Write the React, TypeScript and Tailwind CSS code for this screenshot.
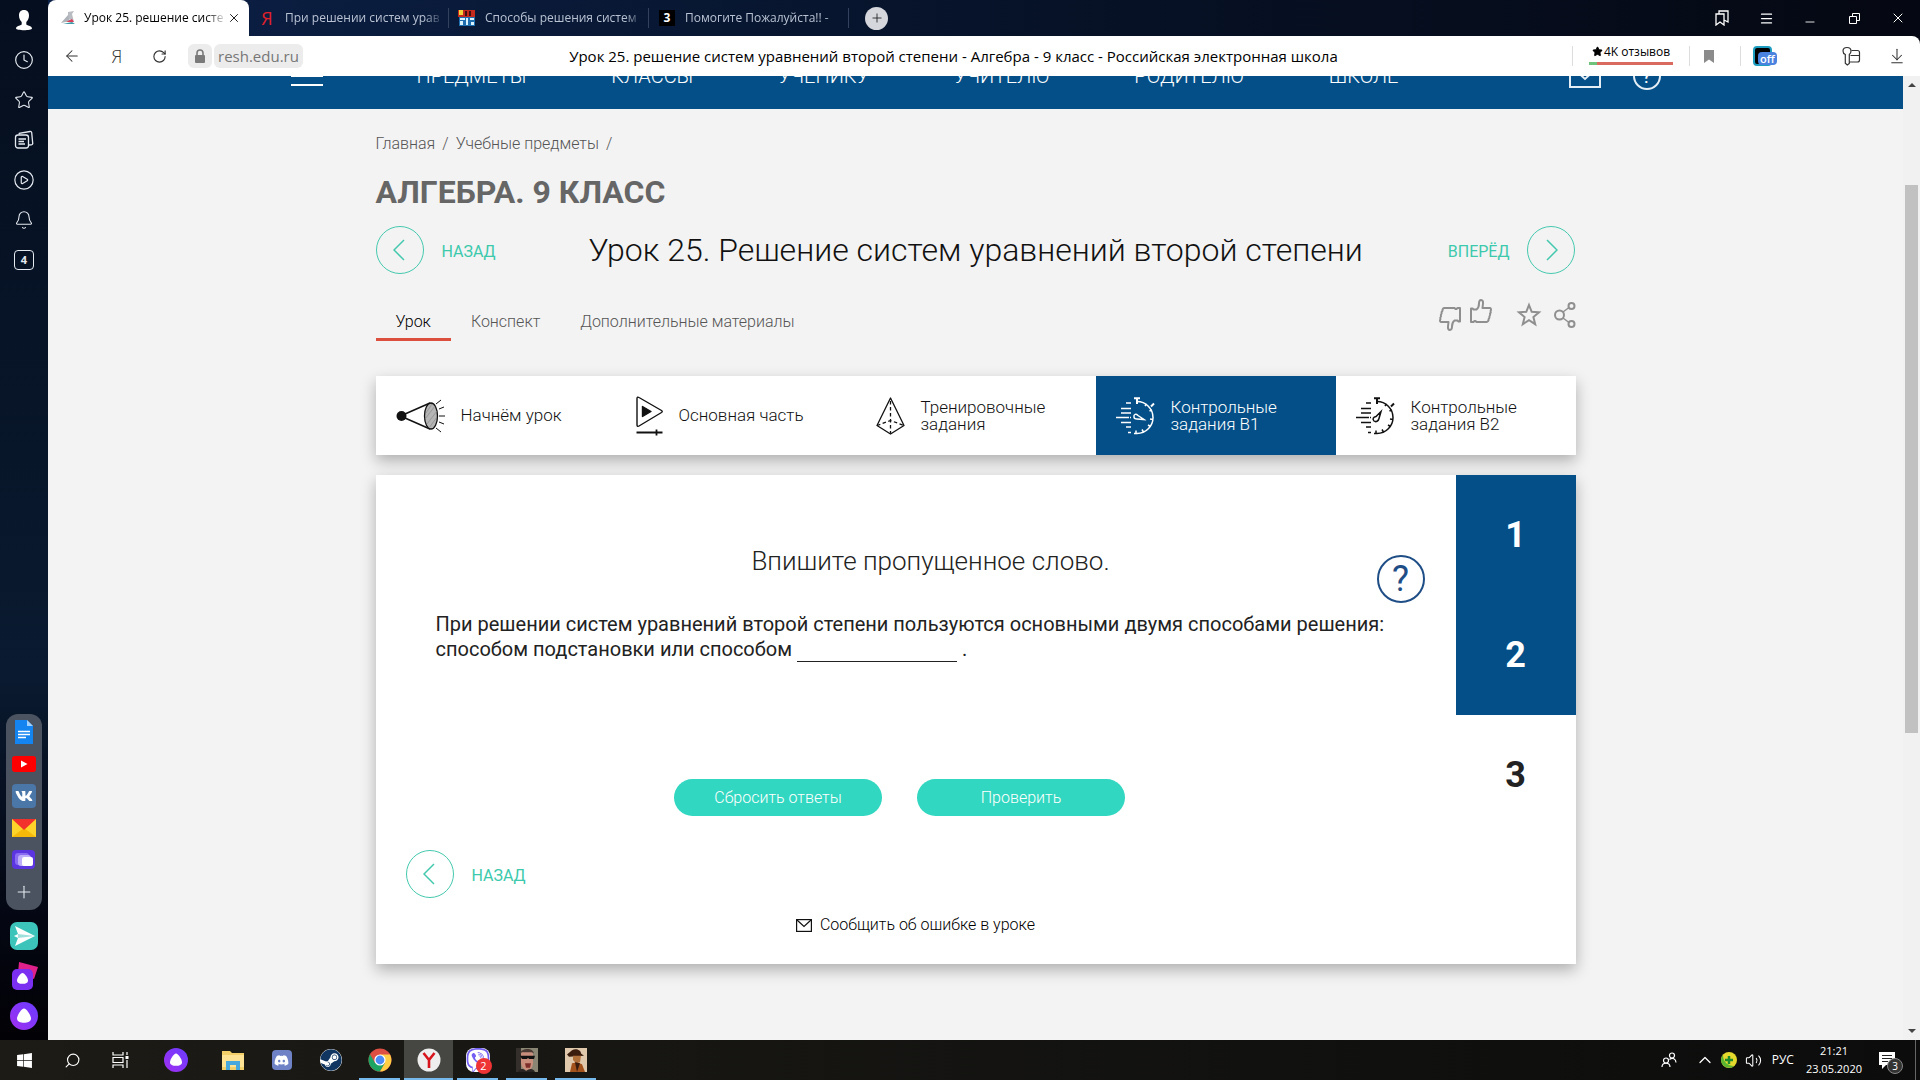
import React from 'react';
import {
  ArrowDownToLine,
  ArrowLeft,
  Bell,
  ChevronUp,
  CirclePlay,
  Clock,
  Menu,
  Minus,
  Plus,
  RotateCw,
  Search,
  Star,
  Volume2,
  X,
} from 'lucide-react';
import { FaDiscord, FaSteam, FaViber, FaVk, FaWindows } from 'react-icons/fa';

/* ---------- small drawings ---------- */

const AliceMark = ({ size }: { size: number }) => (
  <svg width={size} height={size} viewBox="0 0 28 28">
    <defs>
      <linearGradient id="alice" x1="0" y1="1" x2="1" y2="0">
        <stop offset="0" stopColor="#a02ff0" />
        <stop offset="1" stopColor="#6a3cff" />
      </linearGradient>
    </defs>
    <circle cx="14" cy="14" r="14" fill="url(#alice)" />
    <path d="M14 6.500c2.400 0 7 6.800 7 10 0 3-3.500 4.300-7 4.300s-7-1.300-7-4.300c0-3.200 4.600-10 7-10z" fill="#fff" />
  </svg>
);

const ChromeMark = () => (
  <svg width="24" height="24" viewBox="0 0 24 24">
    <circle cx="12" cy="12" r="11.500" fill="#dd4f43" />
    <path d="M2 6.300A11.500 11.500 0 0 0 12 23.500L17 15H7z" fill="#1da362" />
    <path d="M12 23.500A11.500 11.500 0 0 0 22 6.500H12L17 15z" fill="#ffce44" />
    <circle cx="12" cy="12" r="5.600" fill="#fff" />
    <circle cx="12" cy="12" r="4.400" fill="#4c8bf5" />
  </svg>
);

const Person = () => (
  <svg width="20" height="24" viewBox="0 0 20 24" fill="#fff">
    <path d="M10 2c3.300 0 5 2.200 5 5.500 0 3-1.200 5.200-2.700 6.400v2.300c0 1.200 5.700 1.500 5.700 4.300 0 .9-4 1.700-8 1.700s-8-.8-8-1.700c0-2.800 5.700-3.100 5.700-4.300v-2.300C6.200 12.700 5 10.500 5 7.500 5 4.200 6.700 2 10 2z" />
  </svg>
);

const Collections = () => (
  <svg width="20" height="20" viewBox="0 0 20 20" fill="none" stroke="#e5e9f0" strokeWidth="1.300">
    <rect x="1.500" y="5" width="13" height="13" rx="2.500" />
    <path d="M5 4.500l.3-1.200L16 1.500a1.500 1.500 0 0 1 1.700 1.200l1 10.500a1.500 1.500 0 0 1-1.500 1.700L15 15M4.500 9H12M4.500 11.500H10M4.500 14H11" />
  </svg>
);

const ThumbUp = ({ className = '' }: { className?: string }) => (
  <svg className={className} width="24" height="28" viewBox="0 0 24 28" fill="none" stroke="#8f8f8f" strokeWidth="2" strokeLinejoin="round">
    <path d="M2 10.500h1.500l1 1h3c2-1.500 2.500-3.500 2.500-6 0-2.300.7-3.500 2-3.500 1.700 0 2.200 1.600 2 3.500l-.5 4.500h7.500c1.200.3 1.300 1.800.6 2.800.3 1 .2 2-.6 2.800.4 1 .2 2-.6 2.800.3 1 0 2-.8 2.600.1 1.500-.6 3-2 3H7.500l-1-1h-1l-1 1H2z" />
  </svg>
);

const Share = () => (
  <svg width="22" height="26" viewBox="0 0 22 26" fill="none" stroke="#8f8f8f" strokeWidth="2">
    <circle cx="5.500" cy="13" r="4.500" />
    <circle cx="17.500" cy="4" r="3" />
    <circle cx="17.500" cy="22" r="3" />
    <path d="M9 10l6-4.500M9 16l6 4.500" strokeWidth="1.500" />
  </svg>
);

const StarOutline = () => (
  <svg width="26" height="26" viewBox="0 0 26 26" fill="none" stroke="#8f8f8f" strokeWidth="2">
    <path d="M13 3l2.700 6.800 7.300.5-5.600 4.700 1.800 7.200-6.200-4-6.200 4 1.800-7.200L3 10.300l7.300-.5z" />
  </svg>
);

const Spotlight = () => (
  <svg width="49" height="34" viewBox="0 0 49 34" fill="none" stroke="#111">
    <circle cx="5.500" cy="17" r="5" fill="#111" stroke="none" />
    <path d="M9 15L34 4M9 19l25 11" strokeWidth="1.500" />
    <ellipse cx="35" cy="17" rx="6.500" ry="13" fill="#b5b5b5" strokeWidth="1.300" />
    <path d="M30 14l6-9M29 20l10-13M31 25l10-13M33 29l8-11" stroke="#888" strokeWidth=".7" />
    <path d="M40 5l5-4M43 10l5-2M43 17h6M43 23l5 2M40 29l5 4" strokeWidth="1" />
  </svg>
);

const PlayBar = () => (
  <svg width="27" height="40" viewBox="0 0 27 40" fill="none" stroke="#111" strokeWidth="1.400" strokeLinejoin="round">
    <path d="M1 2.500C1 1 2 .8 3 1.500l22.500 13c1 .7 1 1.300 0 2L3 30c-1 .7-2 .3-2-1z" />
    <path d="M6.500 10.500l8.500 5-8.500 5z" fill="#111" />
    <path d="M.5 36.500h26" strokeWidth="2" />
    <path d="M20.500 33.500v6" strokeWidth="1.800" />
  </svg>
);

const Pyramid = () => (
  <svg width="29" height="38" viewBox="0 0 29 38" fill="none" stroke="#111" strokeWidth="1.300" strokeLinejoin="round">
    <path d="M14.500 1L1 28.500l13.500 8.500L28 28.500z" />
    <path d="M14.500 4v32M1 28.500l13.500-5 13.500 5" strokeDasharray="3.500 2.500" />
  </svg>
);

const Stopwatch = ({ needle }: { needle: string }) => (
  <svg width="39" height="38" viewBox="0 0 39 38" fill="none" stroke="currentColor" strokeWidth="1.500">
    <path d="M21 4.500a16 16 0 0 1 0 32h-3" />
    <path d="M18 1.200h6M21 1v6M35 9.500l3-3" strokeWidth="2" />
    <path d="M29 9l1.500-2M33.500 14l2.500-1M34 22l3 .5M32 28l2.500 1.500M26 32.500l1.500 2.500M20 33.500V36" />
    <path d="M10 6h5M5 11.500h10M10 6.500M5 16h10M0 20.500h15M5 25.500h10M10 30h5M12 35.500h3" strokeDasharray="13 1" />
    <path d={needle} />
  </svg>
);

const Envelope = () => (
  <svg width="16" height="13" viewBox="0 0 16 13" fill="none" stroke="#111" strokeWidth="1.200">
    <rect x=".6" y=".6" width="14.800" height="11.800" />
    <path d="M1 1l7 6.500L15 1" />
  </svg>
);

/* ---------- browser chrome ---------- */

const ReshIcon = () => (
  <svg width="16" height="16" viewBox="0 0 16 16">
    <path d="M8 2l6-1-2 3 2 8L8 8z" fill="#b9bcc2" />
    <path d="M8 5l2 6-9 2z" fill="#aeb2b9" />
    <path d="M6 12l6-3 2 3z" fill="#d8405a" />
    <path d="M3 14l9-2 3 2z" fill="#3f9aa8" />
  </svg>
);

const CubeIcon = () => (
  <svg width="18" height="16" viewBox="0 0 18 16">
    <path d="M0 0h17v7H0z" fill="#c42b1c" />
    <path d="M1 0h4v5H1z" fill="#f2d13a" />
    <path d="M7 1h2v5H7zM11 1h2v5h-2z" fill="#401010" />
    <path d="M1 7h16v9H1z" fill="#1f6fb0" />
    <path d="M2 8h5v2H2zM2 11h3v4H2zM8 8h2v7H8zM12 8h4v2h-4zM13 12h3v3h-3z" fill="#d9f2ff" />
  </svg>
);

const backgroundTabs = [
  { title: 'При решении систем урав', icon: <span className="text-lg leading-none text-[#e0202a]">Я</span> },
  { title: 'Способы решения систем', icon: <CubeIcon /> },
  {
    title: 'Помогите Пожалуйста!! -',
    icon: <span className="flex h-4 w-4 items-center justify-center bg-black text-xs font-bold text-white">3</span>,
  },
];

const TabBar = () => (
  <div className="flex h-9 shrink-0 items-stretch bg-linear-to-r from-[#0c2148] via-[#07142c] via-45% to-[#050812] text-xs text-[#b9c2d3]">
    <div className="flex w-[201px] items-center rounded-t-lg bg-white pr-2 pl-3 text-black">
      <ReshIcon />
      <span className="ml-2 flex-1 whitespace-nowrap [mask-image:linear-gradient(to_right,black_85%,transparent)]">
        Урок 25. решение систе
      </span>
      <button aria-label="Закрыть вкладку">
        <X size={14} strokeWidth={1.5} />
      </button>
    </div>
    {backgroundTabs.map((tab) => (
      <div key={tab.title} className="flex w-[200px] items-center">
        <span className="ml-2 flex w-5 justify-center">{tab.icon}</span>
        <span className="mr-1 ml-2 flex-1 whitespace-nowrap [mask-image:linear-gradient(to_right,black_88%,transparent)]">
          {tab.title}
        </span>
        <span className="h-5 w-px bg-[#33415e]" />
      </div>
    ))}
    <button aria-label="Новая вкладка" className="ml-4 flex h-[23px] w-[23px] items-center justify-center self-center rounded-full bg-[#d5d7dd] text-[#222]">
      <Plus size={14} strokeWidth={1.5} />
    </button>
    <div className="ml-auto flex items-center text-white">
      <button aria-label="Закладки" className="flex w-11 justify-center">
        <svg width="14" height="16" viewBox="0 0 14 16" fill="none" stroke="currentColor" strokeWidth="1.300">
          <path d="M1 4h8v11l-4-3-4 3zM4 4V1h9v11l-4-2" />
        </svg>
      </button>
      <button aria-label="Меню" className="flex w-11 justify-center">
        <Menu size={15} strokeWidth={2} />
      </button>
      <button aria-label="Свернуть" className="flex w-11 justify-center pt-2">
        <Minus size={14} strokeWidth={1.5} />
      </button>
      <button aria-label="Окно" className="flex w-11 justify-center">
        <svg width="11" height="11" viewBox="0 0 11 11" fill="none" stroke="currentColor">
          <path d="M.5 3.500h7v7h-7zM3.500 3.500v-3h7v7h-3" />
        </svg>
      </button>
      <button aria-label="Закрыть" className="flex w-11 justify-center">
        <X size={16} strokeWidth={1.5} />
      </button>
    </div>
  </div>
);

const AddressBar = () => (
  <div className="flex h-10 shrink-0 items-center rounded-tr-lg bg-white text-[#333]">
    <button aria-label="Назад" className="flex w-12 justify-center">
      <ArrowLeft size={18} strokeWidth={1.4} />
    </button>
    <button aria-label="Яндекс" className="flex w-[42px] justify-center text-lg font-light">
      Я
    </button>
    <button aria-label="Обновить" className="flex w-[42px] justify-center">
      <RotateCw size={15} strokeWidth={1.8} />
    </button>
    <span className="ml-2 flex h-6 w-6 items-center justify-center rounded-md bg-[#ececec]">
      <svg width="12" height="14" viewBox="0 0 12 14">
        <rect x="1" y="6" width="10" height="8" rx="1" fill="#7a7a7a" />
        <path d="M3 6V4a3 3 0 0 1 6 0v2" fill="none" stroke="#7a7a7a" strokeWidth="1.600" />
      </svg>
    </span>
    <span className="ml-[2px] flex h-6 items-center rounded-md bg-[#ececec] px-1 text-[15px] text-[#777]">resh.edu.ru</span>
    <span className="flex-1 pl-8 text-center text-[15px] whitespace-nowrap text-black">
      Урок 25. решение систем уравнений второй степени - Алгебра - 9 класс - Российская электронная школа
    </span>
    <div className="flex items-center">
      <span className="h-5 w-px bg-[#ddd]" />
      <span className="flex w-[116px] flex-col items-center pb-1">
        <span className="flex items-center gap-px text-xs leading-4 text-black">
          <Star size={11} fill="black" />
          4K отзывов
        </span>
        <span className="mt-[2px] flex h-[3px] w-[84px]">
          <span className="w-2 bg-[#6fc27c]" />
          <span className="flex-1 bg-[#d96a5f]" />
        </span>
      </span>
      <span className="h-5 w-px bg-[#ddd]" />
      <button aria-label="Закладка" className="flex w-[50px] justify-center pr-3">
        <svg width="10" height="13" viewBox="0 0 10 13">
          <path d="M0 0h10v13L5 9.500 0 13z" fill="#8b8b8b" />
        </svg>
      </button>
      <span className="h-5 w-px bg-[#ddd]" />
      <button aria-label="Расширение" className="relative ml-3 h-5 w-6">
        <span className="block h-5 w-[19px] rounded-sm border-2 border-[#1d9ec0] bg-black" />
        <span className="absolute top-[6px] left-[5px] rounded-sm bg-[#4a82df] px-[2px] text-[11px] leading-[13px] font-semibold text-white">
          off
        </span>
      </button>
      <button aria-label="Пароли" className="ml-[65px]">
        <svg width="20" height="20" viewBox="0 0 20 20" fill="none" stroke="#333" strokeWidth="1.200">
          <path d="M1 5c0-2 1-3.500 4-3.500S9 3 9 5 8 8 7.300 8.500v9l-2 1.500-2-1.700V8.500C2 8 1 7 1 5z" />
          <path d="M9.500 4.500h6c1.500 0 2 .8 2 2V14c0 1.500-.5 2-2 2H7.500M8.500 9.500h9" />
        </svg>
      </button>
      <button aria-label="Загрузки" className="mr-[14px] ml-[26px]">
        <ArrowDownToLine size={18} strokeWidth={1.400} />
      </button>
    </div>
  </div>
);

const Sidebar = () => (
  <aside className="flex w-12 shrink-0 flex-col items-center bg-linear-to-b from-[#050e1e] via-[#0a1a30] via-65% to-[#020206] text-[#e5e9f0]">
    {[
      <Person />,
      <Clock size={20} strokeWidth={1.400} />,
      <Star size={20} strokeWidth={1.300} />,
      <Collections />,
      <CirclePlay size={22} strokeWidth={1.300} />,
      <Bell size={20} strokeWidth={1.300} />,
      <span className="flex h-5 w-5 items-center justify-center rounded border border-[#e5e9f0] text-[11px] font-bold">4</span>,
    ].map((icon, i) => (
      <button key={i} className="flex h-10 w-full items-center justify-center">
        {icon}
      </button>
    ))}
    <div className="mt-auto flex w-9 flex-col items-center rounded-xl bg-[#4b5360] py-[2px]">
      {[
        <svg width="18" height="24" viewBox="0 0 18 24">
          <path d="M0 0h12l6 6v18H0z" fill="#1384f0" />
          <path d="M12 0l6 6h-6z" fill="#9fd0ff" />
          <path d="M3 11.500h12M3 14.500h12M3 17.500h8" stroke="#fff" strokeWidth="1.400" />
        </svg>,
        <svg width="24" height="16" viewBox="0 0 24 16">
          <rect width="24" height="16" rx="3" fill="#f00" />
          <path d="M9 4.500l6.500 3.500L9 11.500z" fill="#fff" />
        </svg>,
        <span className="flex h-6 w-6 items-center justify-center rounded-sm bg-[#4a76a8] text-white">
          <FaVk size={18} />
        </span>,
        <svg width="24" height="18" viewBox="0 0 24 18">
          <path d="M0 0h24v18H0z" fill="#ffd42a" />
          <path d="M0 18L12 9l12 9z" fill="#f6b90a" />
          <path d="M0 0h24L12 11z" fill="#f2302c" />
        </svg>,
        <svg width="24" height="20" viewBox="0 0 24 20">
          <rect width="23" height="19" rx="4" fill="#5a35e0" />
          <rect x="3" y="3" width="14" height="12" rx="3" fill="#8a6cf2" />
          <rect x="6" y="5" width="13" height="11" rx="3" fill="#bfaefa" />
          <rect x="10" y="7" width="11" height="9" rx="2" fill="#fff" />
        </svg>,
        <Plus size={20} strokeWidth={1.300} />,
      ].map((icon, i) => (
        <button key={i} className="flex h-8 w-full items-center justify-center">
          {icon}
        </button>
      ))}
    </div>
    <div className="mt-1.5 mb-1 flex flex-col">
      <button aria-label="Турбо" className="flex h-10 items-center justify-center">
        <svg width="28" height="28" viewBox="0 0 28 28">
          <rect width="28" height="28" rx="7" fill="#3cc4bb" />
          <path d="M5 4l20 10L5 24l3-8-4-2 4-2z" fill="#fff" />
          <path d="M8 12l17 2-17 2z" fill="#9fe0dc" />
        </svg>
      </button>
      <button aria-label="Коллекции" className="flex h-10 items-center justify-center">
        <svg width="28" height="28" viewBox="0 0 28 28">
          <path d="M9 0l19 5-4 12-16-6z" fill="#e0218a" />
          <rect x="2" y="7" width="21" height="21" rx="5" fill="#7b2ff0" />
          <path d="M12.500 11c2 0 5.500 5 5.500 7.500s-2.500 3.300-5.500 3.300S7 21 7 18.500s3.500-7.500 5.500-7.500z" fill="#fff" />
        </svg>
      </button>
      <button aria-label="Алиса" className="flex h-10 items-center justify-center">
        <AliceMark size={28} />
      </button>
    </div>
  </aside>
);

/* ---------- lesson page ---------- */

const menu = ['ПРЕДМЕТЫ', 'КЛАССЫ', 'УЧЕНИКУ', 'УЧИТЕЛЮ', 'РОДИТЕЛЮ', 'ШКОЛЕ'];

const SiteHeader = () => (
  <header className="flex h-[33px] items-center justify-center bg-[#044f88] text-white">
    <div className="mb-[33px] flex w-[1370px] items-center">
      <button aria-label="Меню" className="flex h-5 w-8 flex-col justify-between">
        <span className="h-[2px] w-full bg-white" />
        <span className="h-[2px] w-full bg-white" />
        <span className="h-[2px] w-full bg-white" />
      </button>
      <nav className="mr-[170px] ml-[94px] flex flex-1 justify-between text-xl font-light">
        {menu.map((item) => (
          <a key={item} href="#">
            {item}
          </a>
        ))}
      </nav>
      <a href="#" aria-label="Почта">
        <svg width="32" height="24" viewBox="0 0 32 24" fill="none" stroke="#e6eef5" strokeWidth="2">
          <rect x="1" y="1" width="30" height="22" />
          <path d="M2 2l14 13L30 2" />
        </svg>
      </a>
      <a href="#" aria-label="Помощь" className="ml-8 flex h-7 w-7 items-center justify-center rounded-full border-2 border-[#e6eef5] text-xl">
        ?
      </a>
    </div>
  </header>
);

const RoundArrow = ({ dir }: { dir: 'left' | 'right' }) => (
  <span className="flex h-12 w-12 items-center justify-center rounded-full border border-[#45c9ae]">
    <svg width="14" height="22" viewBox="0 0 14 22" fill="none" stroke="#45c9ae" strokeWidth="1.500">
      <path d={dir === 'left' ? 'M11 1L1 11l10 10' : 'M3 1l10 10L3 21'} />
    </svg>
  </span>
);

const BackLink = () => (
  <a href="#" className="flex items-center gap-[18px] text-base text-[#3cc9ac]">
    <RoundArrow dir="left" />
    <span className="pt-1">НАЗАД</span>
  </a>
);

const steps = [
  { label: 'Начнём урок', icon: <Spotlight /> },
  { label: 'Основная часть', icon: <PlayBar /> },
  { label: 'Тренировочные задания', icon: <Pyramid /> },
  { label: 'Контрольные задания В1', icon: <Stopwatch needle="M18 20c-.5-3 2-3.500 4-1.500l6 4-7-.5c-2 0-3-.5-3-2z" />, active: true },
  { label: 'Контрольные задания В2', icon: <Stopwatch needle="M18 24c-2-2-.5-4 2-4.500l5-5-2 7c-.5 2.500-3 4-5 2.500z" /> },
];

const StepTabs = () => (
  <nav className="mt-[35px] grid h-[79px] grid-cols-5 bg-white shadow-[0_6px_14px_rgba(0,0,0,0.28)]">
    {steps.map((step) => (
      <a
        key={step.label}
        href="#"
        className={`flex items-center gap-4 pl-5 text-[17px] leading-[17px] font-light ${
          step.active ? 'bg-[#044f88] text-white' : 'text-[#111]'
        }`}
      >
        <span className="shrink-0">{step.icon}</span>
        <span className="max-w-[140px]">{step.label}</span>
      </a>
    ))}
  </nav>
);

const TaskPanel = () => (
  <section className="mt-5 flex bg-white shadow-[0_6px_14px_rgba(0,0,0,0.28)]">
    <div className="relative flex-1 pt-[68px] pb-[27px]">
      <div className="pr-[30px] pl-[60px]">
        <h3 className="text-center text-[26px] leading-9 font-light text-[#222]">Впишите пропущенное слово.</h3>
        <p className="mt-[33px] text-xl leading-[25px] text-[#222]">
          <label htmlFor="answer">
            При решении систем уравнений второй степени пользуются основными двумя способами решения: способом подстановки
            или способом
          </label>{' '}
          <input id="answer" className="h-[25px] w-40 border-b border-[#222] align-top outline-none" /> .
        </p>
      </div>
      <button
        aria-label="Подсказка"
        className="absolute top-20 right-[31px] flex h-12 w-12 items-center justify-center rounded-full border-2 border-[#1f4e86] text-4xl text-[#1f4e86]"
      >
        ?
      </button>
      <div className="mt-[117px] flex justify-center gap-[35px] pr-8 text-base font-light text-white">
        <button className="h-[37px] w-52 rounded-full bg-[#31d7c0]">Сбросить ответы</button>
        <button className="h-[37px] w-52 rounded-full bg-[#31d7c0]">Проверить</button>
      </div>
      <div className="mt-[34px] flex pl-[30px]">
        <BackLink />
      </div>
      <a href="#" className="mt-[15px] flex items-center justify-center gap-2 text-base font-light text-black">
        <Envelope />
        Сообщить об ошибке в уроке
      </a>
    </div>
    <ol className="w-[120px] text-4xl font-bold">
      {[1, 2, 3].map((n) => (
        <li key={n}>
          <button className={`h-[120px] w-full ${n < 3 ? 'bg-[#044f88] text-white' : 'text-[#222]'}`}>{n}</button>
        </li>
      ))}
    </ol>
  </section>
);

const LessonPage = () => (
  <div className="flex-1 overflow-hidden bg-[#f3f3f3] font-[Roboto,sans-serif]">
    <SiteHeader />
    <main className="mx-auto max-w-[1200px] pt-[23px]">
      <div className="flex gap-[7px] text-base font-light text-[#555]">
        <a href="#">Главная</a>/<a href="#">Учебные предметы</a>/
      </div>
      <h1 className="mt-4 text-[32px] leading-10 font-bold text-[#666]">АЛГЕБРА. 9 КЛАСС</h1>
      <div className="mt-[14px] flex items-center justify-between">
        <BackLink />
        <h2 className="pl-2 text-[32px] leading-none font-light text-[#111]">Урок 25. Решение систем уравнений второй степени</h2>
        <a href="#" className="flex items-center gap-[18px] text-base text-[#3cc9ac]">
          <span className="pt-1">ВПЕРЁД</span>
          <RoundArrow dir="right" />
        </a>
      </div>
      <div className="mt-6 flex h-[43px] justify-between text-base font-light text-[#555]">
        <nav className="flex">
          <a href="#" className="border-b-3 border-[#dc4f3c] px-5 pt-3 text-black">Урок</a>
          <a href="#" className="px-5 pt-3">Конспект</a>
          <a href="#" className="px-5 pt-3">Дополнительные материалы</a>
        </nav>
        <div className="flex items-start">
          <button aria-label="Не нравится" className="mt-[6px]">
            <ThumbUp className="rotate-180" />
          </button>
          <button aria-label="Нравится" className="ml-[7px]">
            <ThumbUp />
          </button>
          <button aria-label="В избранное" className="mt-1 ml-[23px]">
            <StarOutline />
          </button>
          <button aria-label="Поделиться" className="mt-1 ml-3">
            <Share />
          </button>
        </div>
      </div>
      <StepTabs />
      <TaskPanel />
    </main>
  </div>
);

const Scrollbar = () => (
  <div className="flex w-[17px] flex-col items-center bg-[#f1f1f1] py-[7px]">
    <span className="border-x-4 border-b-4 border-x-transparent border-b-[#444]" />
    <span className="mt-[98px] h-[548px] w-[13px] bg-[#c1c1c1]" />
    <span className="mt-auto border-x-4 border-t-4 border-x-transparent border-t-[#444]" />
  </div>
);

/* ---------- windows taskbar ---------- */

const apps = [
  { name: 'Проводник', icon: (
    <svg width="22" height="22" viewBox="0 0 22 22">
      <path d="M0 2h8l2 2h12v17H0z" fill="#f3cf6a" />
      <path d="M0 6h22v12H0z" fill="#ffe394" />
      <path d="M4 12h14v9h-4v-5H8v5H4z" fill="#46a8dc" />
    </svg>
  ) },
  { name: 'Discord', icon: (
    <span className="flex h-5 w-5 items-center justify-center rounded-sm bg-[#6f82c6] text-white">
      <FaDiscord size={15} />
    </span>
  ) },
  { name: 'Steam', icon: <FaSteam size={22} className="rounded-full bg-white text-[#0f3560]" /> },
  { name: 'Chrome', icon: <ChromeMark />, open: true },
  { name: 'Яндекс.Браузер', icon: (
    <svg width="24" height="24" viewBox="0 0 24 24">
      <circle cx="12" cy="12" r="11.500" fill="#eee" />
      <path d="M6.500 5l5.500 7 5.500-7M12 12v8" fill="none" stroke="#d8141c" strokeWidth="2.600" />
    </svg>
  ), open: true, active: true },
  { name: 'Viber', icon: (
    <span className="relative">
      <FaViber size={24} className="rounded-lg bg-white text-[#7360f2]" />
      <span className="absolute top-[10px] left-[10px] flex h-4 w-4 items-center justify-center rounded-full bg-[#ee3434] text-[11px] text-white">
        2
      </span>
    </span>
  ), open: true },
  { name: 'GTA', icon: (
    <svg width="22" height="24" viewBox="0 0 22 22" preserveAspectRatio="none">
      <path d="M0 0h22v22H0z" fill="#8a8673" />
      <path d="M0 0h5v22H0z" fill="#352f2b" />
      <path d="M5 5c2-4 10-4 12 0v8c0 4-2 7-5 8-4-1-7-4-7-8z" fill="#c98f7c" />
      <path d="M4 5c1-5 13-6 14 0l-2-1H6z" fill="#4a3a34" />
      <path d="M4 7h15l-1 3h-5l-1-1-1 1H6z" fill="#111" />
      <path d="M9 14h6l-1 4h-4z" fill="#7c2e2a" />
      <path d="M2 22c1-3 5-4 8-1 3-2 7-3 9 1z" fill="#2a2422" />
    </svg>
  ), open: true },
  { name: 'San Andreas', icon: (
    <svg width="22" height="24" viewBox="0 0 22 22" preserveAspectRatio="none">
      <path d="M0 0h22v22H0z" fill="#e0c8ac" />
      <path d="M2 6l5-4c4-2 9 0 9 3l3 2-15 1z" fill="#3a1d0e" />
      <path d="M8 7h8l-1 6-4 1-3-3z" fill="#b0703c" />
      <path d="M5 22l2-8 5-1 5 2 3 7z" fill="#a4521c" />
      <path d="M10 13l2 9 3-8z" fill="#3a1d0e" />
    </svg>
  ), open: true },
];

const Taskbar = () => (
  <footer className="flex h-10 shrink-0 items-stretch bg-linear-to-r from-[#1c1b16] to-[#0c0c0c] text-white">
    <button aria-label="Пуск" className="flex w-12 items-center justify-center">
      <FaWindows size={17} />
    </button>
    <button aria-label="Поиск" className="flex w-12 items-center justify-center">
      <Search size={17} strokeWidth={1.600} className="-scale-x-100" />
    </button>
    <button aria-label="Представление задач" className="flex w-12 items-center justify-center">
      <svg width="17" height="16" viewBox="0 0 17 16" fill="none" stroke="#fff" strokeWidth="1.200">
        <path d="M1 0v3h10V0M1 16v-3h10v3M1 5.500h10v5H1zM15 0v3M15 8v8" />
        <path d="M13.500 4h3v3h-3z" fill="#fff" stroke="none" />
      </svg>
    </button>
    <button aria-label="Алиса" className="ml-2 flex w-12 items-center justify-center">
      <AliceMark size={24} />
    </button>
    <div className="ml-2 flex">
      {apps.map((app) => (
        <button
          key={app.name}
          aria-label={app.name}
          className={`relative flex w-[49px] items-center justify-center ${app.active ? 'bg-[#464642]' : ''}`}
        >
          {app.icon}
          {app.open && (
            <span className={`absolute bottom-0 h-[2px] bg-[#76b9ed] ${app.active ? 'inset-x-0' : 'inset-x-1'}`} />
          )}
        </button>
      ))}
    </div>
    <div className="ml-auto flex items-center">
      <svg width="16" height="16" viewBox="0 0 16 16" fill="none" stroke="#fff" strokeWidth="1.200">
        <circle cx="11" cy="3.500" r="2.500" />
        <circle cx="5" cy="8.500" r="2.500" />
        <path d="M1 15c0-5 8-5 8 0M8.500 7.500c3-2.500 6.500-.5 6.500 3" />
      </svg>
      <ChevronUp size={20} strokeWidth={1.500} className="ml-[18px]" />
      <svg className="ml-[6px]" width="16" height="16" viewBox="0 0 16 16">
        <circle cx="8" cy="8" r="8" fill="#e4d92c" />
        <path d="M0 8a8 8 0 0 0 13 6C7 14 2 10 2 3a8 8 0 0 0-2 5z" fill="#5cb531" />
        <path d="M8 4v8M4 8h8" stroke="#1d8a2c" strokeWidth="2.500" />
      </svg>
      <Volume2 size={17} strokeWidth={1.500} className="ml-2" />
      <span className="ml-[10px] text-xs">РУС</span>
      <span className="ml-3 flex flex-col items-center text-[11px] leading-[18px]">
        <span>21:21</span>
        <span>23.05.2020</span>
      </span>
      <button aria-label="Уведомления" className="relative mr-4 ml-[17px] h-5 w-5">
        <svg width="17" height="17" viewBox="0 0 17 17">
          <path d="M0 0h16v13H7l-4 4v-4H0z" fill="#fff" />
          <path d="M3 3.500h10M3 6.500h10M3 9.500h6" stroke="#222" strokeWidth="1.200" />
        </svg>
        <span className="absolute top-2 left-2 flex h-4 w-4 items-center justify-center rounded-full border border-[#888] bg-[#333] text-[10px]">
          3
        </span>
      </button>
      <span className="mr-1 h-10 w-px bg-[#666]" />
    </div>
  </footer>
);

export default function App() {
  return (
    <div className="flex h-screen flex-col overflow-hidden font-['Open_Sans','Noto_Sans',sans-serif]">
      <div className="flex min-h-0 flex-1">
        <Sidebar />
        <div className="flex min-w-0 flex-1 flex-col bg-[#050812]">
          <TabBar />
          <AddressBar />
          <div className="flex min-h-0 flex-1">
            <LessonPage />
            <Scrollbar />
          </div>
        </div>
      </div>
      <Taskbar />
    </div>
  );
}
